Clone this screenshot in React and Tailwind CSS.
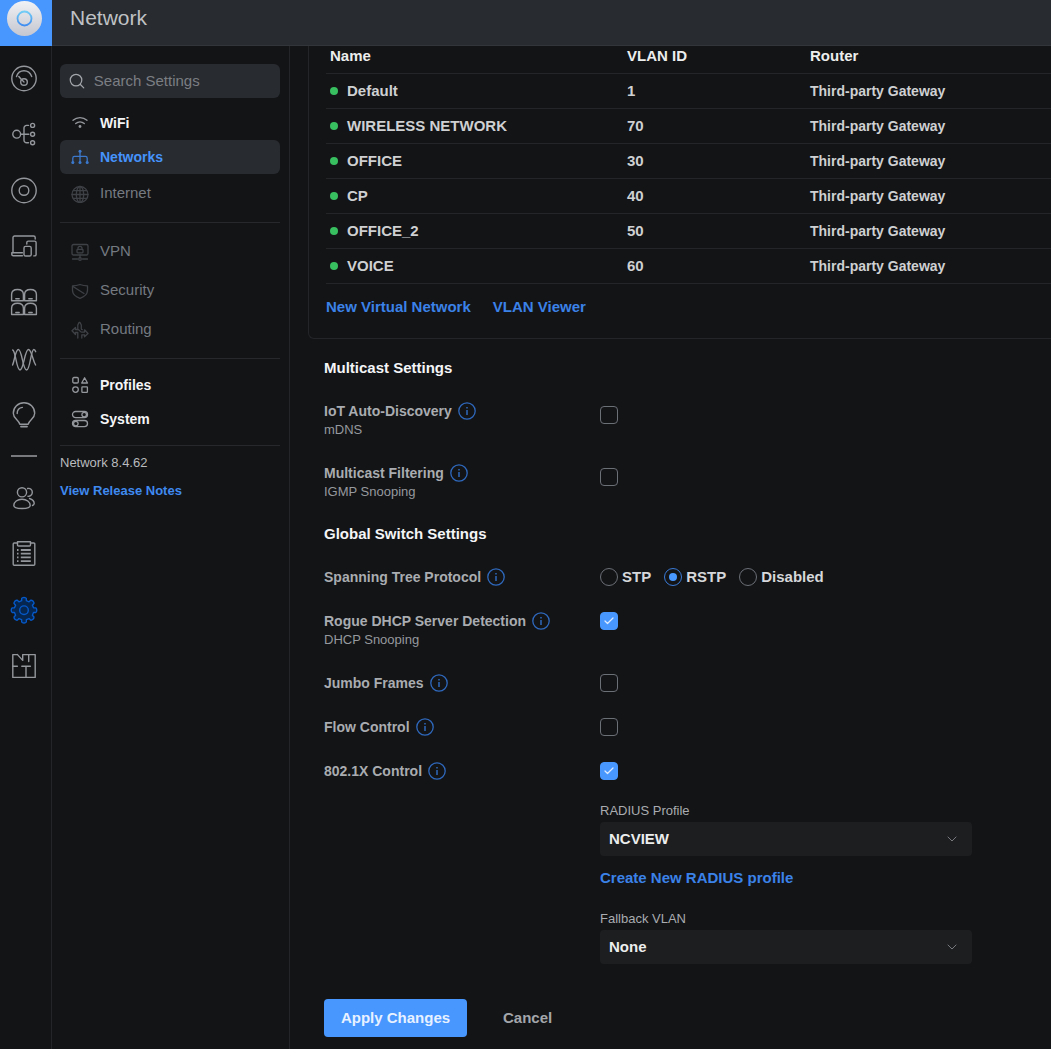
import React from "react";
import { ChevronDown, Check } from "lucide-react";

const stroke = {
  fill: "none",
  stroke: "currentColor",
  strokeLinecap: "round",
  strokeLinejoin: "round",
};

function Icon({ size = 28, box = 28, width = 1.4, children }) {
  return (
    <svg
      width={size}
      height={size}
      viewBox={`0 0 ${box} ${box}`}
      strokeWidth={width}
      aria-hidden="true"
      {...stroke}
    >
      {children}
    </svg>
  );
}

function polar(radius, degrees) {
  const a = (degrees * Math.PI) / 180;
  return `${(14 + radius * Math.cos(a)).toFixed(2)} ${(14.2 + radius * Math.sin(a)).toFixed(2)}`;
}

const gearPath =
  Array.from({ length: 8 }, (_, i) => {
    const a = i * 45;
    return `${i === 0 ? "M" : "L"}${polar(9.8, a - 14)}L${polar(12, a - 11)}Q${polar(12.8, a - 8)} ${polar(
      12.8,
      a
    )}Q${polar(12.8, a + 8)} ${polar(12, a + 11)}L${polar(9.8, a + 14)}`;
  }).join("") + "Z";

const arch = "M1.600 12.700V6.500C1.600 3.200 4.200 1.500 7.500 1.500s5.900 1.700 5.900 5v6.200zM5.800 10.700h3.400";

const railTop = [
  {
    name: "Dashboard",
    art: (
      <>
        <circle cx="14" cy="14.500" r="12.2" />
        <path d="M6.500 12.500C7.700 8.700 10.600 6.800 14 6.800s6.300 2 7.700 5.700" />
        <circle cx="14" cy="18" r="3.3" />
        <path d="M8.800 12.500 11 15l3 3" />
      </>
    ),
  },
  {
    name: "Topology",
    art: (
      <>
        <circle cx="6.7" cy="14.2" r="3.9" />
        <path d="M10.6 14.2h8.2M18.500 5.400h-1.900a2.600 2.600 0 0 0-2.600 2.600v12.200a2.600 2.600 0 0 0 2.600 2.600h1.900" />
        <circle cx="22.6" cy="5.4" r="2" />
        <circle cx="22.6" cy="14.2" r="2" />
        <circle cx="22.6" cy="22.8" r="2" />
      </>
    ),
  },
  {
    name: "Devices",
    art: (
      <>
        <circle cx="14" cy="14.500" r="12.2" />
        <circle cx="14" cy="14.500" r="4.8" />
      </>
    ),
  },
  {
    name: "Client Devices",
    art: (
      <>
        <path d="M3 20.500V5.600a1.600 1.600 0 0 1 1.600-1.600h19a1.600 1.600 0 0 1 1.600 1.600V7" />
        <path d="M12.4 20.800H1.800v1.400a1.500 1.500 0 0 0 1.500 1.500h9.100" />
        <rect x="14" y="14.400" width="7.200" height="9.600" rx="1.600" />
        <path d="M16.800 12v-1.400a1.500 1.500 0 0 1 1.500-1.500h6.300a1.500 1.500 0 0 1 1.500 1.500v11.800a1.500 1.500 0 0 1-1.500 1.500h-.8" />
      </>
    ),
  },
  {
    name: "Ports",
    art: (
      <>
        <path d={arch} />
        <path d={arch} transform="translate(13 0)" />
        <path d={arch} transform="translate(0 13.800)" />
        <path d={arch} transform="translate(13 13.800)" />
      </>
    ),
  },
  {
    name: "Radios",
    art: (
      <g transform="translate(0 1.500)">
        <path d="M2.600 19.500C4.800 14 5.500 4 8.400 4c3.600 0 4.400 20.500 8.200 20.500 3.500 0 4.300-20.500 7.200-20.500 1 0 1.400.8 1.900 2.200" />
        <path d="M2.700 4.500C5.800 5.500 6.300 24.500 10 24.500c3.700 0 4.700-20.500 8.400-20.500 3.200 0 4 10 7.200 15.500" />
      </g>
    ),
  },
  {
    name: "Insights",
    art: (
      <g transform="translate(0 1.200)">
        <path d="M9.800 23c-.4-1.700-1.500-2.900-3-4.400C4.700 16.600 3.300 15 3.300 12a10.700 10.500 0 0 1 21.400 0c0 3-1.400 4.600-3.500 6.600-1.500 1.500-2.600 2.700-3 4.400z" />
        <path d="M7.200 12.300c0-3.600 2.300-5.700 5.200-6.100" />
        <path d="M11 25.400h6" strokeWidth="1.800" />
      </g>
    ),
  },
];

const railBottom = [
  {
    name: "Admins",
    art: (
      <>
        <circle cx="12" cy="8.300" r="4.600" />
        <path d="M3.800 21.500c0-3.700 3.700-6.300 8.200-6.300s8.200 2.600 8.200 6.300c0 1.900-3.700 3-8.200 3s-8.200-1.100-8.200-3z" />
        <path d="M17.600 4.500c2.700-.7 4.700 1.300 4.700 3.800s-2 4.300-4.300 4M19.500 14.500c2.700.8 4.700 3 4.700 5 0 1-.7 1.600-1.700 2" />
      </>
    ),
  },
  {
    name: "System Log",
    art: (
      <>
        <path d="M7.500 3H4.200c-.7 0-1 .3-1 1v20.300c0 .7.300 1 1 1h19.600c.7 0 1-.3 1-1V4c0-.7-.3-1-1-1h-3.300" />
        <path d="M7.500 1.800h13V5c0 .6-.4 1-1 1h-11c-.6 0-1-.4-1-1z" />
        <path d="M10.800 10h10M10.800 13.700h10M10.800 17.400h10M10.800 21.100h10M7 10h1.500M7 13.700h1.500M7 17.400h1.500M7 21.100h1.500" strokeWidth="1.800" strokeLinecap="butt" />
      </>
    ),
  },
  {
    name: "Settings",
    active: true,
    art: (
      <>
        <path fill="#06254f" d={gearPath} />
        <circle cx="14" cy="14.200" r="4.300" />
      </>
    ),
  },
  {
    name: "Innerspace",
    art: (
      <>
        <path d="M7.500 2.600H2.800v22.800h22.400V2.600H12.700v5.800L7.500 2.600" />
        <path d="M18.700 2.600v7M2.800 14.300h4.600M11.800 14.300h8.600M16 14.300v11.100" />
      </>
    ),
  },
];

function RailLink({ item }) {
  return (
    <a
      href="#"
      aria-label={item.name}
      className={
        item.active
          ? "flex h-14 items-center justify-center text-[#0559c9]"
          : "flex h-14 items-center justify-center text-[#94979c]"
      }
    >
      <Icon>{item.art}</Icon>
    </a>
  );
}

const navIcons = {
  WiFi: (
    <>
      <path d="M2 6.200a10.500 10.500 0 0 1 14 0M4.700 9.600a6.500 6.500 0 0 1 8.600 0" />
      <circle cx="9" cy="12.500" r="1.400" fill="currentColor" stroke="none" />
    </>
  ),
  Networks: (
    <>
      <path d="M9 3v11.500M1.800 14.500v-4.300c0-1.200.6-1.800 1.800-1.800h10.800c1.200 0 1.800.6 1.800 1.800v4.300" />
      <g fill="currentColor" stroke="none">
        <circle cx="9" cy="3.200" r="1.500" />
        <circle cx="1.800" cy="14.500" r="1.500" />
        <circle cx="9" cy="14.500" r="1.500" />
        <circle cx="16.200" cy="14.500" r="1.500" />
      </g>
    </>
  ),
  Internet: (
    <>
      <circle cx="9" cy="9.500" r="8" />
      <ellipse cx="9" cy="9.500" rx="3.700" ry="8" />
      <path d="M9 1.500v16M1 9.500h16M2.500 5.700h13M2.500 13.300h13" />
    </>
  ),
  VPN: (
    <>
      <rect x="1" y="1.500" width="16" height="10.500" rx="1.500" />
      <path d="M9 12v3M1.500 16h5M11.500 16h5M7 6.500V5.300a2 2 0 0 1 4 0v1.200" />
      <rect x="6" y="6.300" width="6" height="3.500" rx=".8" />
      <circle cx="9" cy="16" r="1.300" />
    </>
  ),
  Security: (
    <>
      <path d="M1.500 3.800c2.800 0 5-.4 7.500-1.300 2.500.9 4.700 1.300 7.500 1.300v4.500c0 4-3 6.500-7.500 8-4.500-1.500-7.500-4-7.500-8z" />
      <path d="M2 4.500 13 11.500" />
    </>
  ),
  Routing: (
    <>
      <path d="M6.800 17v-5.500H4.500v2L1 9.800l3.500-3.300v2h2.300V4l1.200-2.500h1L10.300 4v3.800c0 .6.400.9 1 .9" />
      <path d="M6.800 8.500c2 0 2 2.600 3.700 2.600h3V8.800l3.500 3.700-3.500 3.300v-2H10.800v3.300" />
    </>
  ),
  Profiles: (
    <>
      <rect x="1.800" y="1.500" width="5.500" height="5.500" rx="1.200" />
      <path d="M13.600 1.800 16.500 7h-5.800z" />
      <circle cx="4.500" cy="13.600" r="2.800" />
      <rect x="10.900" y="10.900" width="5.500" height="5.500" rx=".6" />
    </>
  ),
  System: (
    <>
      <rect x="1.500" y="1.500" width="15" height="6.200" rx="3.100" />
      <rect x="1.500" y="10.500" width="15" height="6.200" rx="3.100" />
      <circle cx="13.200" cy="4.600" r="2.300" />
      <circle cx="4.800" cy="13.600" r="2.300" />
    </>
  ),
};

function NavItem({ name, state = "normal" }) {
  const row = {
    normal: "flex h-[34px] items-center gap-[11px] rounded-md px-[11px] text-[#94979c]",
    active: "flex h-[34px] items-center gap-[11px] rounded-md bg-[#282b30] px-[11px] text-[#3b78cc]",
    muted: "flex h-[39px] items-center gap-[11px] rounded-md px-[11px] text-[#3e4146]",
  }[state];
  const text = {
    normal: "text-sm font-bold text-[#f4f5f6]",
    active: "text-sm font-bold text-[#4593fb]",
    muted: "text-[15px] text-[#757a81]",
  }[state];
  return (
    <li>
      <a href="#" className={row}>
        <Icon size={18} box={18} width={1.3}>
          {navIcons[name]}
        </Icon>
        <span className={text}>{name}</span>
      </a>
    </li>
  );
}

const networks = [
  ["Default", 1],
  ["WIRELESS NETWORK", 70],
  ["OFFICE", 30],
  ["CP", 40],
  ["OFFICE_2", 50],
  ["VOICE", 60],
];

function NetworkTable() {
  return (
    <table className="w-full table-fixed border-collapse text-left">
      <thead>
        <tr className="border-b border-[#232528] text-[15px] leading-5 text-[#eceded]">
          <th className="w-[301px] pb-[7px] pl-1 align-top font-bold">Name</th>
          <th className="w-[183px] pb-[7px] align-top font-bold">VLAN ID</th>
          <th className="pb-[7px] align-top font-bold">Router</th>
        </tr>
      </thead>
      <tbody className="font-bold text-[#ced0d2]">
        {networks.map(([name, id]) => (
          <tr key={name} className="h-[35px] border-b border-[#232528]">
            <td className="pl-1">
              <div className="flex items-center gap-[9px] text-[15px] leading-5">
                <span className="size-2 rounded-full bg-[#38bf60]" />
                {name}
              </div>
            </td>
            <td className="text-[15px] leading-5">{id}</td>
            <td className="text-sm leading-5">Third-party Gateway</td>
          </tr>
        ))}
      </tbody>
    </table>
  );
}

function InfoButton({ topic }) {
  return (
    <button type="button" aria-label={`About ${topic}`} className="text-[#2f69bd]">
      <Icon size={18} box={18} width={1.3}>
        <circle cx="9" cy="9" r="8.200" />
        <path d="M9 8v5" strokeWidth="1.500" strokeLinecap="butt" />
        <path d="M9 5v1.500" strokeWidth="1.500" strokeLinecap="butt" />
      </Icon>
    </button>
  );
}

function CheckBox({ id, checked }) {
  return (
    <span className="grid size-[18px] place-items-center">
      <input
        id={id}
        type="checkbox"
        defaultChecked={checked}
        className="peer col-start-1 row-start-1 size-[18px] appearance-none rounded border border-[#6b6f76] checked:border-[#4797ff] checked:bg-[#4797ff]"
      />
      <Check
        size={12}
        strokeWidth={2.5}
        aria-hidden="true"
        className="pointer-events-none col-start-1 row-start-1 text-transparent peer-checked:text-[#dcebff]"
      />
    </span>
  );
}

function SettingRow({ id, label, hint, children }) {
  return (
    <div className="grid grid-cols-[276px_1fr]">
      <div>
        <div className="flex h-5 items-center gap-[6px]">
          <label htmlFor={id} className="text-sm font-bold leading-5 text-[#a9acb0]">
            {label}
          </label>
          <InfoButton topic={label} />
        </div>
        {hint && <p className="text-[13px] leading-[18px] text-[#96999e]">{hint}</p>}
      </div>
      <div>{children}</div>
    </div>
  );
}

function CheckRow({ checked, low, ...rest }) {
  return (
    <SettingRow {...rest}>
      <div className={low ? "flex h-7 items-center" : "flex h-5 items-center"}>
        <CheckBox id={rest.id} checked={checked} />
      </div>
    </SettingRow>
  );
}

function Radio({ id, label, checked }) {
  return (
    <span className="flex items-center gap-1">
      <span className="grid size-[18px] place-items-center">
        <input
          id={id}
          type="radio"
          name="stp"
          defaultChecked={checked}
          className="peer col-start-1 row-start-1 size-[18px] appearance-none rounded-full border border-[#6b6f76] checked:border-[#3a7bd8]"
        />
        <span className="pointer-events-none col-start-1 row-start-1 size-2 rounded-full peer-checked:bg-[#4797ff]" />
      </span>
      <label htmlFor={id} className="text-[15px] font-bold leading-5 text-[#d5d7da]">
        {label}
      </label>
    </span>
  );
}

function Select({ id, label, value }) {
  return (
    <div className="max-w-[372px]">
      <label htmlFor={id} className="mb-[2px] block text-[13px] leading-[18px] text-[#a9acb0]">
        {label}
      </label>
      <div className="grid items-center">
        <select
          id={id}
          defaultValue={value}
          className="col-start-1 row-start-1 h-[34px] w-full appearance-none rounded bg-[#1c1e20] px-[9px] text-[15px] font-bold text-[#eceded]"
        >
          <option>{value}</option>
        </select>
        <ChevronDown
          size={16}
          strokeWidth={1.3}
          aria-hidden="true"
          className="pointer-events-none col-start-1 row-start-1 mr-3 justify-self-end text-[#85888d]"
        />
      </div>
    </div>
  );
}

export default function App() {
  return (
    <div className="flex min-h-screen flex-col bg-[#131416] font-['Liberation_Sans',Arial,sans-serif]">
      <header className="flex h-[46px] bg-[#282b2f]">
        <a href="#" aria-label="Home" className="flex w-[52px] justify-center bg-[#4797ff] pt-[1px] pr-[3px]">
          <span className="flex size-[35px] items-center justify-center rounded-full bg-linear-to-b from-[#f1f2f5] to-[#c4c6d0]">
            <svg width="17" height="17" viewBox="0 0 17 17" fill="none" aria-hidden="true">
              <defs>
                <linearGradient id="ring" x1="0" y1="0" x2="0" y2="1">
                  <stop stopColor="#74cdf5" />
                  <stop offset="1" stopColor="#3f8df0" />
                </linearGradient>
              </defs>
              <circle cx="8.500" cy="8.500" r="7" stroke="url(#ring)" strokeWidth="1.800" />
            </svg>
          </span>
        </a>
        <div className="flex-1 border-b border-[#323539] pt-1 pl-[18px]">
          <h1 className="text-[21px] leading-7 text-[#bfc1c4]">Network</h1>
        </div>
      </header>

      <div className="flex flex-1">
        <nav aria-label="Applications" className="w-[52px] shrink-0 border-r border-[#232528] pt-1 pr-[3px]">
          {railTop.map((item) => (
            <RailLink key={item.name} item={item} />
          ))}
          <div className="flex h-7 items-center justify-center">
            <span className="h-[2px] w-[26px] bg-[#77797d]" />
          </div>
          {railBottom.map((item) => (
            <RailLink key={item.name} item={item} />
          ))}
        </nav>

        <aside className="w-[238px] shrink-0 border-r border-[#232528] pt-[18px] pr-[9px] pl-2">
          <label className="mb-2 flex h-[34px] items-center gap-[9px] rounded-md bg-[#282b30] pr-2 pl-[9px] text-[#a3a6ab]">
            <Icon size={18} box={18} width={1.4}>
              <circle cx="8" cy="8" r="6.600" />
              <path d="m13 13 3.800 3.800" />
            </Icon>
            <input
              type="search"
              aria-label="Search Settings"
              placeholder="Search Settings"
              className="w-full min-w-0 bg-transparent text-[15px] outline-none placeholder:text-[#7b7e83]"
            />
          </label>
          <ul>
            <NavItem name="WiFi" />
            <NavItem name="Networks" state="active" />
            <NavItem name="Internet" state="muted" />
          </ul>
          <hr className="my-[9px] border-[#26282b]" />
          <ul>
            <NavItem name="VPN" state="muted" />
            <NavItem name="Security" state="muted" />
            <NavItem name="Routing" state="muted" />
          </ul>
          <hr className="my-[9px] border-[#26282b]" />
          <ul>
            <NavItem name="Profiles" />
            <NavItem name="System" />
          </ul>
          <hr className="mt-[9px] mb-[7px] border-[#26282b]" />
          <p className="text-[13px] leading-5 text-[#b9bbbe]">Network 8.4.62</p>
          <a href="#" className="mt-2 block text-[13px] font-bold leading-5 text-[#3f8af0]">
            View Release Notes
          </a>
        </aside>

        <main className="min-w-0 flex-1 pb-3">
          <section className="ml-[18px] rounded-bl-md border-b border-l border-[#232528] pb-[21px] pl-[17px]">
            <NetworkTable />
            <div className="mt-[13px] flex gap-[22px] text-[15px] font-bold leading-5 text-[#3b82e8]">
              <a href="#">New Virtual Network</a>
              <a href="#">VLAN Viewer</a>
            </div>
          </section>

          <form className="flex flex-col gap-6 pt-5 pl-[34px]" onSubmit={(e) => e.preventDefault()}>
            <h2 className="text-[15px] font-bold leading-[18px] text-[#f4f5f6]">Multicast Settings</h2>
            <CheckRow id="mdns" label="IoT Auto-Discovery" hint="mDNS" low />
            <CheckRow id="igmp" label="Multicast Filtering" hint="IGMP Snooping" low />
            <h2 className="text-[15px] font-bold leading-[18px] text-[#f4f5f6]">Global Switch Settings</h2>
            <SettingRow id="rstp" label="Spanning Tree Protocol">
              <div className="flex h-5 items-center gap-[13px]">
                <Radio id="stp" label="STP" />
                <Radio id="rstp" label="RSTP" checked />
                <Radio id="nostp" label="Disabled" />
              </div>
            </SettingRow>
            <CheckRow id="rogue" label="Rogue DHCP Server Detection" hint="DHCP Snooping" checked />
            <CheckRow id="jumbo" label="Jumbo Frames" />
            <CheckRow id="flow" label="Flow Control" />
            <SettingRow id="dot1x" label="802.1X Control">
              <div className="flex h-5 items-center">
                <CheckBox id="dot1x" checked />
              </div>
              <div className="pt-[21px]">
                <Select id="radius" label="RADIUS Profile" value="NCVIEW" />
                <a href="#" className="my-3 block text-[15px] font-bold leading-5 text-[#3b82e8]">
                  Create New RADIUS profile
                </a>
                <div className="pt-[10px]">
                  <Select id="fallback" label="Fallback VLAN" value="None" />
                </div>
              </div>
            </SettingRow>
            <div className="flex items-center gap-9 pt-[11px]">
              <button
                type="submit"
                className="h-[38px] w-[143px] rounded bg-[#4797ff] text-[15px] font-bold text-[#e8f1ff]"
              >
                Apply Changes
              </button>
              <button type="button" className="text-[15px] font-bold text-[#a3a6ab]">
                Cancel
              </button>
            </div>
          </form>
        </main>
      </div>
    </div>
  );
}
